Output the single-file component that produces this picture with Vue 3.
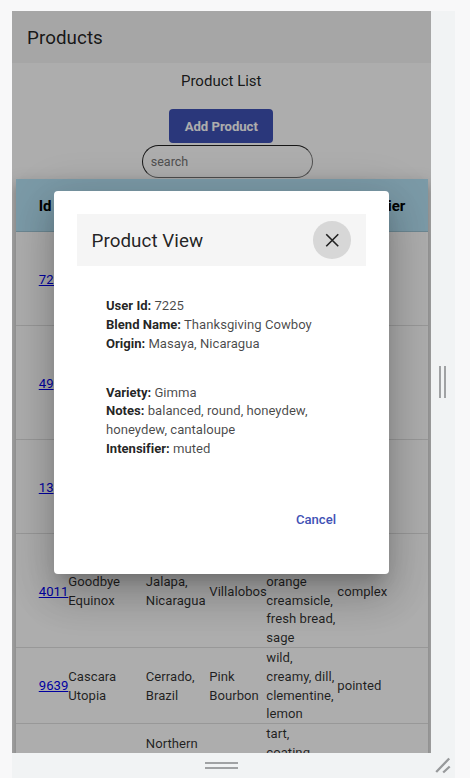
<script setup>
const columns = ['Id', '', '', '', '', 'Intensifier']
const rows = [
  { h: 94, cells: ['7225', '', '', '', '', ''] },
  { h: 114, cells: ['49', '', '', '', '', ''] },
  { h: 94, cells: ['13', '', '', '', '', ''] },
  { h: 114, cells: ['4011', 'Goodbye Equinox', 'Jalapa, Nicaragua', 'Villalobos', 'orange creamsicle, fresh bread, sage', 'complex'], mod: 'low' },
  { h: 76, cells: ['9639', 'Cascara Utopia', 'Cerrado, Brazil', 'Pink Bourbon', 'wild, creamy, dill, clementine, lemon', 'pointed'], mod: 'tight' },
  { h: 94, cells: ['', '', 'Northern', '', 'tart,\ncoating', ''], mod: 'top' },
]
</script>

<template>
  <div class="stage">
    <div class="device">
      <header class="toolbar">Products</header>
      <main class="content">
        <h2 class="subtitle">Product List</h2>
        <button class="add">Add Product</button>
        <input class="search" placeholder="search" />
        <div class="table">
          <div class="row head">
            <span v-for="(c, i) in columns" :key="i">{{ c }}</span>
          </div>
          <div v-for="(r, i) in rows" :key="i" class="row" :class="r.mod" :style="{ height: r.h + 'px' }">
            <template v-for="(c, j) in r.cells" :key="j">
              <a v-if="j === 0" href="#">{{ c }}</a>
              <span v-else :class="{ notes: j === 4 }">{{ c }}</span>
            </template>
          </div>
        </div>
      </main>
      <div class="backdrop"></div>
      <section class="dialog">
        <div class="dialog-head">
          <span>Product View</span>
          <button class="close" aria-label="Close">
            <svg viewBox="0 0 24 24"><path d="M5.6 5.6 18.4 18.4M18.4 5.6 5.6 18.4" /></svg>
          </button>
        </div>
        <div class="details">
          <p><b>User Id:</b> 7225<br /><b>Blend Name:</b> Thanksgiving Cowboy<br /><b>Origin:</b> Masaya, Nicaragua</p>
          <p><b>Variety:</b> Gimma<br /><b>Notes:</b> balanced, round, honeydew, honeydew, cantaloupe<br /><b>Intensifier:</b> muted</p>
        </div>
        <button class="cancel">Cancel</button>
      </section>
    </div>
    <div class="side"><i></i><i></i></div>
    <div class="bottom"><i></i><i></i></div>
    <div class="corner">
      <svg viewBox="0 0 24 26"><path d="M5.2 19 18.2 5.5M12.2 19.5 18.7 13.5" /></svg>
    </div>
  </div>
</template>

<style>
body { margin: 0; overflow: hidden; }
</style>

<style scoped>
* { box-sizing: border-box; }
.stage {
  width: 470px;
  height: 778px;
  padding: 11px 15px 0 12px;
  display: grid;
  grid-template-columns: 418.5px 24.5px;
  grid-template-rows: 741.5px 25.5px;
  background: #f8f8f9;
  font-family: Roboto, sans-serif;
}
.device {
  position: relative;
  overflow: hidden;
  background: #fff;
  color: rgba(0, 0, 0, .82);
}
.toolbar {
  height: 52px;
  padding: 1px 0 0 15px;
  display: flex;
  align-items: center;
  background: #f5f5f5;
  font-size: 18.8px;
  font-weight: 400;
  letter-spacing: .06px;
  color: rgba(0, 0, 0, .87);
}
.content { display: flex; flex-direction: column; align-items: center; }
.subtitle {
  margin: 7px 0 0;
  height: 39px;
  font-size: 15px;
  line-height: 22px;
  font-weight: 400;
  letter-spacing: 0;
  color: rgba(0, 0, 0, .87);
}
.add {
  width: 104px;
  height: 34px;
  border: 0;
  padding: 0;
  border-radius: 4px;
  background: #3f51b5;
  color: #fff;
  font: 700 13.1px Roboto, sans-serif;
}
.search {
  width: 171px;
  height: 33px;
  margin: 2px 0 0 12px;
  padding: 0 7.5px 0 8px;
  border: 1.9px inset #767676;
  border-radius: 17px;
  background: transparent;
  font: 400 12.5px Roboto, sans-serif;
}
.search::placeholder { color: #757575; }
.table {
  width: 412px;
  margin: 1px 0 0 1px;
  box-shadow: 0 5px 5px -3px rgba(0, 0, 0, .2), 0 8px 10px 1px rgba(0, 0, 0, .14), 0 3px 14px 2px rgba(0, 0, 0, .12);
}
.row {
  display: grid;
  grid-template-columns: 29.5px 77.5px 63.5px 57px 71px 1fr;
  padding: 3px 0 0 23px;
  align-items: center;
  border-bottom: 1px solid rgba(0, 0, 0, .12);
  font-size: 13.1px;
  line-height: 18.8px;
  letter-spacing: .04px;
}
.row a { color: #0000ee; }
.notes { white-space: pre-line; }
.head {
  height: 53px;
  background: #b6e3f6;
  color: #000;
  font-size: 15px;
  font-weight: 700;
  letter-spacing: -.1px;
}
.low .notes { align-self: end; margin-bottom: -1px; }
.tight { padding-top: 1px; }
.top { align-items: start; padding-top: 1px; }
.top span:not(.notes) { padding-top: 10px; }
.backdrop { position: absolute; inset: 0; background: rgba(0, 0, 0, .32); }
.dialog {
  position: absolute;
  left: 42px;
  top: 180px;
  width: 334.5px;
  height: 382.5px;
  padding: 22.5px;
  border-radius: 4px;
  background: #fff;
  display: flex;
  flex-direction: column;
  box-shadow: 0 11px 15px -7px rgba(0, 0, 0, .2), 0 24px 38px 3px rgba(0, 0, 0, .14), 0 9px 46px 8px rgba(0, 0, 0, .12);
}
.dialog-head {
  height: 52.5px;
  padding: 0 15px;
  display: flex;
  align-items: center;
  justify-content: space-between;
  background: #f5f5f5;
  color: rgba(0, 0, 0, .87);
  font-size: 18.8px;
  font-weight: 400;
  letter-spacing: .06px;
}
.dialog-head span { padding-top: 2px; }
.close {
  width: 37.6px;
  height: 37.6px;
  padding: 0;
  border: 0;
  border-radius: 50%;
  display: grid;
  place-items: center;
  background: #d7d7d7;
}
.close svg { width: 22.5px; height: 22.5px; margin-left: 1px; fill: none; stroke: #212121; stroke-width: 1.7; }
.details {
  padding: 31px 30px 0 29.5px;
  font-size: 13.1px;
  line-height: 18.75px;
  letter-spacing: .02px;
  color: rgba(0, 0, 0, .72);
}
.details p { margin: 0 0 30.3px; }
.details b { color: rgba(0, 0, 0, .87); letter-spacing: -.02px; }
.cancel {
  margin: 21.7px 30px 0 auto;
  padding: 0;
  border: 0;
  background: none;
  color: #3f51b5;
  font: 500 13.1px/18px Roboto, sans-serif;
}
.side, .bottom { display: flex; align-items: center; justify-content: center; background: #f1f3f4; }
.side { gap: 3px; }
.side i { width: 2px; height: 32px; background: #a0a2a4; }
.bottom { flex-direction: column; gap: 3px; }
.bottom i { width: 33px; height: 2px; background: #a0a2a4; }
.corner { background: #f1f3f4; }
.corner svg { display: block; width: 24px; height: 26px; fill: none; stroke: #97999b; stroke-width: 2.3; }
</style>
